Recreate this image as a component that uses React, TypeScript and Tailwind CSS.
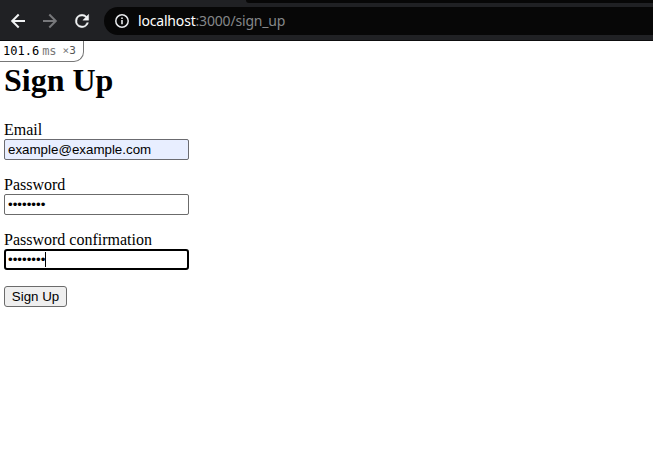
import React from "react";

function BrowserBar() {
  return (
    <header className="flex h-[41px] flex-col border-b border-[#0d0d0e] bg-[#202124]">
      <div className="flex h-[3px] shrink-0 justify-end">
        <div className="w-[407px] rounded-bl-[6px] bg-[#070707]" />
      </div>
      <div className="flex flex-1 items-center pb-[2px] pl-[10px]">
        <svg width="16" height="16" viewBox="0 0 16 16" fill="none" stroke="#f1f3f4" strokeWidth="2" className="shrink-0">
          <path d="M15 8H2.5M8.7 1.5L2.2 8L8.7 14.5" />
        </svg>
        <svg width="16" height="16" viewBox="0 0 16 16" fill="none" stroke="#77787b" strokeWidth="2" className="ml-4 shrink-0">
          <path d="M1 8H13.5M7.3 1.5L13.8 8L7.3 14.5" />
        </svg>
        <svg width="20" height="20" viewBox="0 0 24 24" fill="#f1f3f4" stroke="#f1f3f4" strokeWidth="0.5" className="ml-[14px] shrink-0">
          <path d="M17.65 6.35A7.96 7.96 0 0 0 12 4a8 8 0 1 0 7.73 10h-2.08A6 6 0 1 1 12 6c1.66 0 3.14.69 4.22 1.78L13 11h7V4z" />
        </svg>
        <div className="ml-3 flex h-7 flex-1 items-center rounded-l-full bg-[#070707] pl-[10px]">
          <svg width="16" height="16" viewBox="0 0 16 16" fill="none" stroke="#e8eaed" className="shrink-0">
            <circle cx="8" cy="8" r="6.2" strokeWidth="1.5" />
            <path d="M8 7.1V11.3M8 4.5V6" strokeWidth="1.6" />
          </svg>
          <span className="ml-2 whitespace-nowrap font-['Noto_Sans',sans-serif] text-[14px] leading-5 tracking-[-0.18px] text-[#85878a]">
            <span className="text-white">localhost</span>:3000/sign_up
          </span>
        </div>
      </div>
    </header>
  );
}

function ProfilerBadge() {
  return (
    <div className="absolute left-0 top-0 flex h-[21px] w-[84px] items-center whitespace-nowrap rounded-br-[10px] border-b border-r border-[#777] bg-white pl-[3px] font-['DejaVu_Sans_Mono',monospace] text-[12px] leading-4 text-black">
      <span>101.6</span>
      <span className="ml-[3px] text-[#777]">ms</span>
      <span className="ml-[6px] text-[11px] text-[#777]">
        ×<span className="text-[#555]">3</span>
      </span>
    </div>
  );
}

const inputBase =
  "block h-[21px] w-[185px] py-0 font-['Liberation_Sans',sans-serif] text-[13.333px] leading-[15px] text-black outline-none";

export default function App() {
  return (
    <div className="h-[465px] w-[653px] overflow-hidden bg-white">
      <BrowserBar />
      <main className="relative h-[424px] pl-1 pt-[21px] font-['Liberation_Serif',serif] text-[16px] leading-[18px] text-black">
        <ProfilerBadge />
        <h1 className="text-[32px] font-bold leading-9">Sign Up</h1>
        <form className="mt-[23px]" onSubmit={(e) => e.preventDefault()}>
          <div className="mb-4">
            <label htmlFor="email" className="block">Email</label>
            <input id="email" type="text" defaultValue="example@example.com" className={`${inputBase} rounded-[2px] border border-[#6b6b70] bg-[#e8eeff] px-[3px]`} />
          </div>
          <div className="mb-4">
            <label htmlFor="password" className="block">Password</label>
            <input id="password" type="password" defaultValue="password" className={`${inputBase} rounded-[2px] border border-[#6b6b6b] bg-white px-[3px]`} />
          </div>
          <div className="relative mb-4">
            <label htmlFor="confirmation" className="block">Password confirmation</label>
            <input id="confirmation" type="password" defaultValue="password" className={`${inputBase} rounded-[3px] border-2 border-black bg-white px-[2px]`} />
            <span className="absolute left-[41px] top-[21px] h-[15px] w-px bg-black" />
          </div>
          <button className="block h-[21px] w-[63px] rounded-[3px] border border-[#6b6b6b] bg-[#efefef] text-center font-['Liberation_Sans',sans-serif] text-[13.333px] leading-[19px]">
            Sign Up
          </button>
        </form>
      </main>
    </div>
  );
}
